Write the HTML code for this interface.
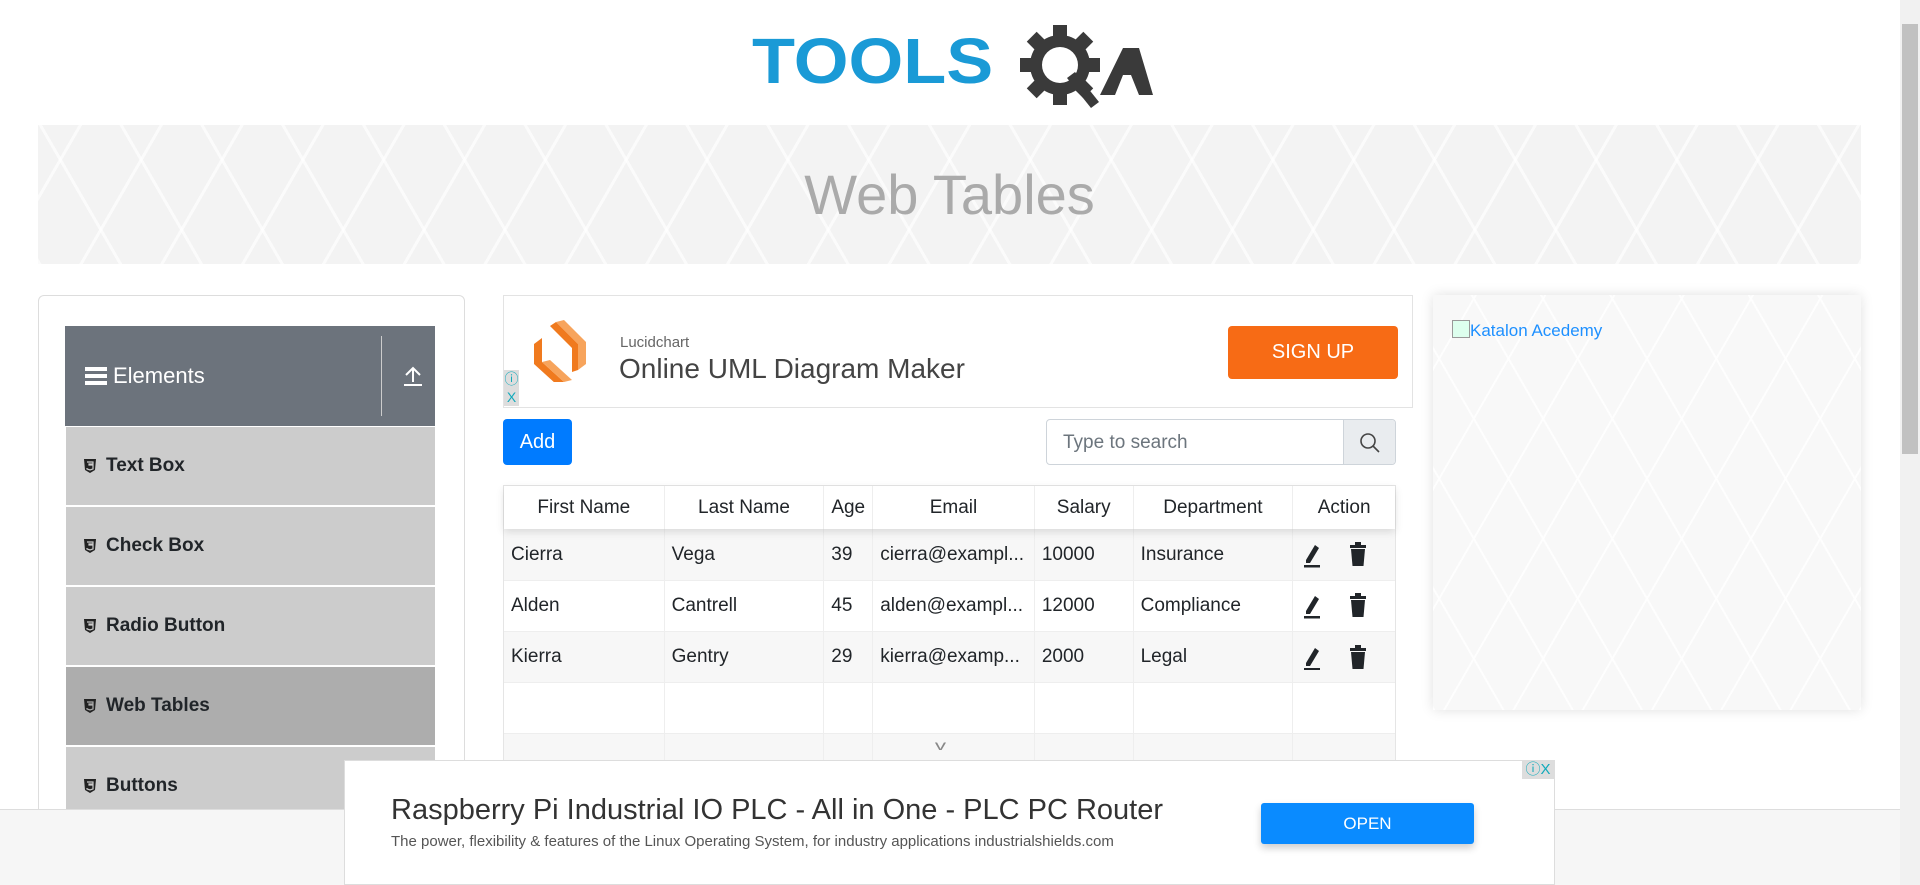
<!DOCTYPE html>
<html style="width:1920px;height:885px;overflow:hidden"><head><meta charset="utf-8"><style>
*{box-sizing:border-box;margin:0;padding:0}
body{width:1920px;height:885px;overflow:hidden;background:#fff;font-family:"Liberation Sans",sans-serif;position:relative;color:#212529}
.a{position:absolute}
.tbl{left:503px;top:485px;width:893px;border:1px solid #e5e5e5;border-bottom:none}
.row{display:flex;height:51px;align-items:center;font-size:19px}
.row div{height:100%;display:flex;align-items:center;border-right:1px solid #eee;padding-left:7px;white-space:nowrap;overflow:hidden}
.row div:last-child{border-right:none}
.hd div{justify-content:center;padding-left:0}
.nav{left:66px;width:369px;height:79px;background:#ccc;font-weight:bold;font-size:19px;display:flex;align-items:center;padding-left:18px;border-bottom:1px solid #fff}
.nav svg{margin-right:10px}
</style></head><body>
<!-- logo -->
<div class="a" style="left:752px;top:28px;font:900 64px/66px 'Liberation Sans',sans-serif;color:#1a9ad6;letter-spacing:0px;transform:scaleX(1.1);transform-origin:left">TOOLS</div>
<svg class="a" style="left:1015px;top:20px" width="140" height="92" viewBox="0 0 140 92">
<g fill="#3a3a3a"><circle cx="45" cy="45" r="30"/><g><rect x="38" y="5" width="14" height="14"/><rect x="38" y="71" width="14" height="14"/><rect x="5" y="38" width="14" height="14"/><rect x="71" y="38" width="14" height="14"/><rect x="38" y="5" width="14" height="14" transform="rotate(45 45 45)"/><rect x="38" y="71" width="14" height="14" transform="rotate(45 45 45)"/><rect x="5" y="38" width="14" height="14" transform="rotate(45 45 45)"/><rect x="71" y="38" width="14" height="14" transform="rotate(45 45 45)"/></g>
<circle cx="45" cy="45" r="18" fill="#fff"/><polygon points="52,58 60,52 84,82 76,88"/>
<polygon points="85,75 108,28 124,28 138,75 124,75 116,55 108,55 100,75"/></g></svg>
<!-- banner -->
<div class="a" style="left:38px;top:125px;width:1823px;height:139px;background:#f3f3f3;background-image:repeating-linear-gradient(60deg,rgba(255,255,255,.7) 0 3px,transparent 3px 70px),repeating-linear-gradient(-60deg,rgba(255,255,255,.7) 0 3px,transparent 3px 70px);text-align:center;font-size:56px;line-height:139px;color:#aaa;font-weight:300">Web Tables</div>
<!-- sidebar -->
<div class="a" style="left:38px;top:295px;width:427px;height:560px;border:1px solid #ddd;border-radius:6px"></div>
<div class="a" style="left:65px;top:326px;width:370px;height:100px;background:#6c737c;color:#fff;font-size:22px;display:flex;align-items:center;padding-left:20px">
<span style="display:inline-block;width:22px;margin-right:6px"><span style="display:block;height:4px;background:#fff;margin:3px 0"></span><span style="display:block;height:4px;background:#fff;margin:3px 0"></span><span style="display:block;height:4px;background:#fff;margin:3px 0"></span></span>Elements
<div class="a" style="left:316px;top:10px;width:1px;height:80px;background:#ccc"></div>
<svg class="a" style="left:336px;top:38px" width="24" height="24" viewBox="0 0 24 24" fill="none" stroke="#fff" stroke-width="2"><path d="M12 18V4M5 11l7-7 7 7M3 21h18"/></svg></div>
<div class="a nav" style="top:427px"><svg width="12" height="14" viewBox="0 0 12 14"><path d="M0 0h12l-1 11-5 3-5-3z" fill="#222"/><path d="M3 3h6v2H5v1h4v4l-3 1-3-1V9" fill="none" stroke="#ccc" stroke-width="1.2"/></svg>Text Box</div>
<div class="a nav" style="top:507px"><svg width="12" height="14" viewBox="0 0 12 14"><path d="M0 0h12l-1 11-5 3-5-3z" fill="#222"/><path d="M3 3h6v2H5v1h4v4l-3 1-3-1V9" fill="none" stroke="#ccc" stroke-width="1.2"/></svg>Check Box</div>
<div class="a nav" style="top:587px"><svg width="12" height="14" viewBox="0 0 12 14"><path d="M0 0h12l-1 11-5 3-5-3z" fill="#222"/><path d="M3 3h6v2H5v1h4v4l-3 1-3-1V9" fill="none" stroke="#ccc" stroke-width="1.2"/></svg>Radio Button</div>
<div class="a nav" style="top:667px;background:#adadad"><svg width="12" height="14" viewBox="0 0 12 14"><path d="M0 0h12l-1 11-5 3-5-3z" fill="#222"/><path d="M3 3h6v2H5v1h4v4l-3 1-3-1V9" fill="none" stroke="#adadad" stroke-width="1.2"/></svg>Web Tables</div>
<div class="a nav" style="top:747px"><svg width="12" height="14" viewBox="0 0 12 14"><path d="M0 0h12l-1 11-5 3-5-3z" fill="#222"/><path d="M3 3h6v2H5v1h4v4l-3 1-3-1V9" fill="none" stroke="#ccc" stroke-width="1.2"/></svg>Buttons</div>
<!-- top ad -->
<div class="a" style="left:503px;top:295px;width:910px;height:113px;border:1px solid #e3e3e3">
<svg class="a" style="left:28px;top:24px" width="56" height="62" viewBox="0 0 56 62"><path d="M24 2l8-2 22 22v22l-8 6V24z" fill="#f7a45c"/><path d="M24 2l22 22v26l-6 2V28L18 6z" fill="#f07a1e"/><path d="M2 24l8-6v24l22 20-8 2L2 44z" fill="#f07a1e"/><path d="M10 42l22 20 8-2-22-20z" fill="#f7a45c"/></svg>
<div class="a" style="left:116px;top:38px;font-size:15px;color:#666">Lucidchart</div>
<div class="a" style="left:115px;top:57px;font-size:28px;color:#444">Online UML Diagram Maker</div>
<div class="a" style="left:724px;top:30px;width:170px;height:53px;background:#f76b15;border-radius:4px;color:#fff;font-size:20px;text-align:center;line-height:53px">SIGN UP</div>
<div class="a" style="left:0;top:74px;width:15px;height:36px;background:#ddd;color:#1ab;font-size:14px;text-align:center;line-height:18px">ⓘ<br>X</div>
</div>
<!-- add & search -->
<div class="a" style="left:503px;top:419px;width:69px;height:46px;background:#007bff;border-radius:4px;color:#fff;font-size:20px;text-align:center;line-height:46px">Add</div>
<div class="a" style="left:1046px;top:419px;width:350px;height:46px;border:1px solid #ced4da;border-radius:4px;overflow:hidden">
<div class="a" style="left:16px;top:12px;font-size:19px;color:#6c757d">Type to search</div>
<div class="a" style="right:0;top:0;width:52px;height:46px;background:#e9ecef;border-left:1px solid #ced4da"><svg style="margin:12px 15px" width="22" height="22" viewBox="0 0 22 22" fill="none" stroke="#444" stroke-width="1.6"><circle cx="9" cy="9" r="7"/><path d="M14 14l6 6"/></svg></div></div>
<!-- table -->
<div class="a tbl">
<div class="row hd" style="height:43px;box-shadow:0 3px 8px rgba(0,0,0,.12);position:relative;z-index:1"><div style="width:161px">First Name</div><div style="width:160px">Last Name</div><div style="width:49px">Age</div><div style="width:162px">Email</div><div style="width:99px">Salary</div><div style="width:160px">Department</div><div style="width:102px">Action</div></div>
<div class="row" style="background:#f7f7f7"><div style="width:161px">Cierra</div><div style="width:160px">Vega</div><div style="width:49px">39</div><div style="width:162px">cierra@exampl...</div><div style="width:99px">10000</div><div style="width:160px">Insurance</div><div style="width:102px"></div></div>
<div class="row" style="border-top:1px solid #eee"><div style="width:161px">Alden</div><div style="width:160px">Cantrell</div><div style="width:49px">45</div><div style="width:162px">alden@exampl...</div><div style="width:99px">12000</div><div style="width:160px">Compliance</div><div style="width:102px"></div></div>
<div class="row" style="background:#f7f7f7;border-top:1px solid #eee"><div style="width:161px">Kierra</div><div style="width:160px">Gentry</div><div style="width:49px">29</div><div style="width:162px">kierra@examp...</div><div style="width:99px">2000</div><div style="width:160px">Legal</div><div style="width:102px"></div></div>
<div class="row" style="border-top:1px solid #eee"><div style="width:161px"></div><div style="width:160px"></div><div style="width:49px"></div><div style="width:162px"></div><div style="width:99px"></div><div style="width:160px"></div><div style="width:102px"></div></div>
<div class="row" style="background:#f7f7f7;border-top:1px solid #eee;height:80px"><div style="width:161px"></div><div style="width:160px"></div><div style="width:49px"></div><div style="width:162px"></div><div style="width:99px"></div><div style="width:160px"></div><div style="width:102px"></div></div>
</div>
<div class="a" style="left:937px;top:737px;color:#888;font-size:14px;transform:scaleX(1.6)">v</div>
<!-- action icons -->
<svg class="a" style="left:1302px;top:540px" width="70" height="130" viewBox="0 0 70 130"><g fill="#212529">
<g id="ic"><path d="M4 20l9-15 4 3-9 15H4z"/><rect x="2" y="25" width="16" height="2.5"/><rect x="48" y="5" width="16" height="3"/><rect x="53" y="2" width="6" height="4"/><path d="M49 9h14l-1.5 17h-11z"/></g>
<use href="#ic" y="51"/><use href="#ic" y="103"/></g></svg>
<!-- right ad -->
<div class="a" style="left:1433px;top:295px;width:428px;height:415px;background:#f8f8f8;background-image:repeating-linear-gradient(60deg,rgba(255,255,255,.8) 0 2px,transparent 2px 60px),repeating-linear-gradient(-60deg,rgba(255,255,255,.8) 0 2px,transparent 2px 60px);box-shadow:0 0 12px rgba(0,0,0,.12)">
<div class="a" style="left:19px;top:25px;font-size:17px;color:#1e90ff"><span style="display:inline-block;width:18px;height:18px;border:1px solid #999;background:#dfe;vertical-align:-2px"></span>Katalon Acedemy</div></div>
<!-- bottom band -->
<div class="a" style="left:0;top:809px;width:1900px;height:76px;background:#f6f6f6;border-top:1px solid #ddd"></div>
<div class="a" style="left:344px;top:760px;width:1211px;height:125px;background:#fff;border:1px solid #ddd">
<div class="a" style="left:46px;top:33px;font-size:29px;color:#333">Raspberry Pi Industrial IO PLC - All in One - PLC PC Router</div>
<div class="a" style="left:46px;top:72px;font-size:15px;color:#555">The power, flexibility &amp; features of the Linux Operating System, for industry applications industrialshields.com</div>
<div class="a" style="left:916px;top:42px;width:213px;height:41px;background:#0a8bff;border-radius:3px;color:#fff;font-size:17px;text-align:center;line-height:41px;box-shadow:0 4px 8px rgba(0,0,0,.2)">OPEN</div>
<div class="a" style="right:0;top:0;width:32px;height:18px;background:#ddd;color:#1ab;font-size:15px;line-height:18px;text-align:center">ⓘX</div></div>
<!-- scrollbar -->
<div class="a" style="left:1900px;top:0;width:20px;height:885px;background:#f1f1f1"></div>
<div class="a" style="left:1902px;top:24px;width:16px;height:430px;background:#c1c1c1"></div>
</body></html>
